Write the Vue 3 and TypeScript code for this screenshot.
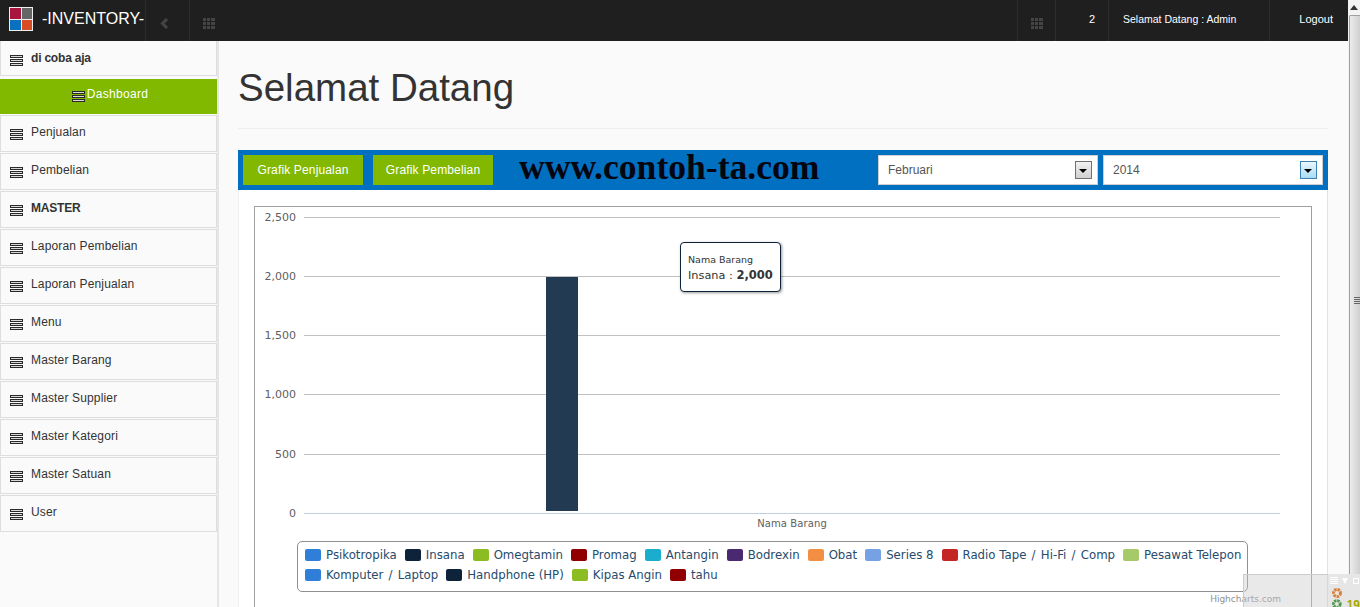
<script setup lang="ts">
interface LegendItem { parts: string[]; color: string }
const menu: { label: string; bold?: boolean; active?: boolean }[] = [
  { label: 'di coba aja', bold: true },
  { label: 'Dashboard', active: true },
  { label: 'Penjualan' },
  { label: 'Pembelian' },
  { label: 'MASTER', bold: true },
  { label: 'Laporan Pembelian' },
  { label: 'Laporan Penjualan' },
  { label: 'Menu' },
  { label: 'Master Barang' },
  { label: 'Master Supplier' },
  { label: 'Master Kategori' },
  { label: 'Master Satuan' },
  { label: 'User' },
]
const legend: LegendItem[] = [
  { parts: ['Psikotropika'], color: '#2f7ed8' },
  { parts: ['Insana'], color: '#0d233a' },
  { parts: ['Omegtamin'], color: '#8bbc21' },
  { parts: ['Promag'], color: '#910000' },
  { parts: ['Antangin'], color: '#1aadce' },
  { parts: ['Bodrexin'], color: '#492970' },
  { parts: ['Obat'], color: '#f28f43' },
  { parts: ['Series 8'], color: '#77a1e5' },
  { parts: ['Radio Tape', 'Hi-Fi', 'Comp'], color: '#c42525' },
  { parts: ['Pesawat Telepon'], color: '#a6c96a' },
  { parts: ['Komputer', 'Laptop'], color: '#2f7ed8' },
  { parts: ['Handphone (HP)'], color: '#0d233a' },
  { parts: ['Kipas Angin'], color: '#8bbc21' },
  { parts: ['tahu'], color: '#910000' },
]
const ticks = [
  { label: '2,500', y: 11 },
  { label: '2,000', y: 70 },
  { label: '1,500', y: 129 },
  { label: '1,000', y: 188 },
  { label: '500', y: 248 },
]
</script>

<template>
  <div class="page">
    <div class="shell">
      <header class="topbar">
        <div class="brand">
          <span class="logo"><i class="c1"></i><i class="c2"></i><i class="c3"></i><i class="c4"></i></span>
          <span class="brand-name">-INVENTORY-</span>
        </div>
        <div class="tool chev">
          <svg width="9" height="11" viewBox="0 0 9 11"><path d="M7 1 2.5 5.5 7 10" fill="none" stroke="#444" stroke-width="3"/></svg>
        </div>
        <div class="tool grid-tool">
          <svg width="12" height="11" viewBox="0 0 12 11" fill="#444"><path d="M0 0h3v3H0zM4 0h3v3H4zM8 0h4v3H8zM0 4h3v3H0zM4 4h3v3H4zM8 4h4v3H8zM0 8h3v3H0zM4 8h3v3H4zM8 8h4v3H8z"/></svg>
        </div>
        <div class="spacer"></div>
        <div class="tool grid-right">
          <svg width="12" height="11" viewBox="0 0 12 11" fill="#444"><path d="M0 0h3v3H0zM4 0h3v3H4zM8 0h4v3H8zM0 4h3v3H0zM4 4h3v3H4zM8 4h4v3H8zM0 8h3v3H0zM4 8h3v3H4zM8 8h4v3H8z"/></svg>
        </div>
        <div class="tbtxt count">2</div>
        <div class="tbtxt welcome">Selamat Datang : Admin</div>
        <div class="tbtxt logout">Logout</div>
      </header>
      <div class="body">
        <aside class="sidebar">
          <ul class="menu">
            <li v-for="m in menu" :key="m.label" :class="{ bold: m.bold, active: m.active }">
              <svg class="ham" width="13" height="11" viewBox="0 0 13 11"><path d="M0 0h13v3H0zM0 4h13v3H0zM0 8h13v3H0z" fill="#2a2a2a"/><path d="M1 1h11v1H1zM1 5h11v1H1zM1 9h11v1H1z" fill="#d8d8d8"/></svg>
              <span>{{ m.label }}</span>
            </li>
          </ul>
        </aside>
        <main class="main">
          <h1 class="title">Selamat Datang</h1>
          <div class="rule"></div>
          <div class="toolbar">
            <button class="btn">Grafik Penjualan</button>
            <button class="btn">Grafik Pembelian</button>
            <div class="site">www.contoh-ta.com</div>
            <div class="select s1"><span>Februari</span><b class="arrow"></b></div>
            <div class="select s2"><span>2014</span><b class="arrow focus"></b></div>
          </div>
          <div class="panel">
            <div class="chart">
              <svg class="plot" width="1055" height="320" viewBox="0 0 1055 320">
                <g v-for="t in ticks" :key="t.label">
                  <line x1="49" x2="1025" :y1="t.y - 0.5" :y2="t.y - 0.5" stroke="#c0c0c0"/>
                  <text x="41" :y="t.y + 3" text-anchor="end" class="axis">{{ t.label }}</text>
                </g>
                <line x1="49" x2="1025" y1="306.5" y2="306.5" stroke="#c0d0e0"/>
                <text x="41" y="310" text-anchor="end" class="axis">0</text>
                <rect x="291" y="70" width="32" height="234" fill="#233a53"/>
                <text x="537" y="320" text-anchor="middle" class="axis small">Nama Barang</text>
              </svg>
              <div class="tooltip">
                <div class="tt-head">Nama Barang</div>
                <div class="tt-body">Insana : <b>2,000</b></div>
              </div>
              <div class="legend">
                <div v-for="l in legend" :key="l.parts[0]" class="leg-item">
                  <i :style="{ background: l.color }"></i>
                  <span>
                    <template v-for="(p, n) in l.parts" :key="p"><span v-if="n > 0" class="sep"> / </span>{{ p }}</template>
                  </span>
                </div>
              </div>
              <div class="credit">Highcharts.com</div>
            </div>
          </div>
        </main>
      </div>
    </div>
    <div class="scrollbar">
      <div class="sb-up">
        <svg width="8" height="5" viewBox="0 0 8 5"><path d="M4 0 8 5H0z" fill="#333"/></svg>
      </div>
      <div class="sb-thumb">
        <span class="grip"></span>
      </div>
    </div>
    <div class="dock"></div>
    <div class="tray">
      <div class="tray-head"><span class="tray-menu"></span><span class="tray-down"></span><span class="tray-max"></span></div>
      <div class="tray-row">
        <svg width="10" height="10" viewBox="0 0 10 10"><circle cx="5" cy="5" r="3.5" fill="none" stroke="#d8813a" stroke-width="3" stroke-dasharray="2.5 0.8"/></svg>
      </div>
      <div class="tray-row">
        <svg width="10" height="10" viewBox="0 0 10 10"><circle cx="5" cy="5" r="3.5" fill="none" stroke="#4f9a4a" stroke-width="3" stroke-dasharray="2.5 0.8"/></svg>
        <em>19</em>
      </div>
    </div>
  </div>
</template>

<style>
html, body { margin: 0; height: 100%; overflow: hidden; background: #fafafa; }
</style>

<style scoped>
.page { position: relative; display: flex; width: 1360px; height: 607px; overflow: hidden; background: #fafafa; font-family: "Liberation Sans", Arial, sans-serif; }
.shell { width: 1348px; flex: none; display: flex; flex-direction: column; }
.topbar { height: 41px; flex: none; display: flex; background: #1f1f1f; color: #fff; position: relative; z-index: 2; }
.brand { width: 146px; flex: none; display: flex; align-items: center; border-right: 1px solid #2d2d2d; box-sizing: border-box; }
.logo { margin: 7px 0 0 9px; align-self: flex-start; width: 24px; height: 24px; box-sizing: border-box; background: #f0f0f0; padding: 1px; display: grid; grid-template-columns: 1fr 1fr; gap: 1px; }
.logo i { display: block; }
.c1 { background: #a8163f; } .c2 { background: #666; } .c3 { background: #0a70c0; } .c4 { background: #d94d26; }
.brand-name { margin-left: 9px; font-size: 16px; color: #fff; margin-top: -3px; }
.tool { flex: none; display: flex; align-items: center; justify-content: center; box-sizing: border-box; border-right: 1px solid #2d2d2d; padding-top: 6px; }
.chev { width: 44px; padding-right: 6px; }
.grid-tool { width: 39px; border-right: 0; border-left: 1px solid #2d2d2d; margin-left: -1px; }
.spacer { flex: 1; border-right: 1px solid #2d2d2d; }
.grid-right { width: 38px; }
.tbtxt { flex: none; display: flex; align-items: center; font-size: 11px; box-sizing: border-box; padding-bottom: 3px; }
.count { width: 53px; justify-content: flex-end; padding-right: 13px; border-right: 1px solid #2d2d2d; }
.welcome { width: 161px; padding-left: 14px; border-right: 1px solid #2d2d2d; font-size: 10.5px; }
.logout { width: 78px; justify-content: flex-end; padding-right: 15px; }
.body { flex: 1; display: flex; min-height: 0; }
.sidebar { width: 219px; flex: none; box-sizing: border-box; border-right: 2px solid #e6e6e6; background: #fafafa; }
.menu { list-style: none; margin: -2px 0 0; padding: 0; width: 217px; }
.menu li { height: 37px; box-sizing: border-box; margin-bottom: 1px; display: flex; align-items: flex-start; padding: 9px 0 0 9px; font-size: 12px; line-height: 14px; letter-spacing: .15px; color: #333; border: 1px solid #dedede; }
.menu li:first-child { padding-top: 11px; }
.menu li .ham { margin: 4px 8px 0 0; flex: none; }
.menu li.bold { font-weight: bold; letter-spacing: -.2px; }
.menu li.active { background: #80b900; color: #fff; justify-content: center; border: 0; border-top: 2px solid #fafafa; padding: 8px 0 0 3px; letter-spacing: .3px; }
.menu li.active .ham { margin-right: 2px; }
.main { flex: 1; min-width: 0; padding: 0 20px 0 19px; }
.title { margin: 0; padding-top: 24px; font-size: 38.5px; line-height: 46px; font-weight: normal; color: #333; }
.rule { margin-top: 17px; height: 1px; background: #eee; }
.toolbar { margin-top: 21px; height: 40px; box-sizing: border-box; background: #0170c1; display: flex; align-items: flex-start; padding: 5px 5px 0; }
.btn { flex: none; height: 30px; width: 120px; padding: 0; border: 0; background: #82b900; color: #fff; font: 12px "Liberation Sans", Arial, sans-serif; letter-spacing: .15px; margin-right: 10px; }
.site { flex: 1; min-width: 0; padding-left: 16px; font: bold 35.6px/24px "Liberation Serif", "Times New Roman", serif; color: #050510; white-space: nowrap; }
.select { flex: none; width: 220px; height: 30px; box-sizing: border-box; background: #fff; border: 1px solid #cfcfcf; display: flex; align-items: center; justify-content: space-between; padding: 0 5px 0 9px; font-size: 12px; color: #555; }
.s1 { margin-right: 5px; }
.arrow { width: 17px; height: 18px; box-sizing: border-box; border: 1px solid #707070; background: linear-gradient(#f2f2f2, #d0d0d0); position: relative; }
.arrow::after { content: ""; position: absolute; left: 3px; top: 7px; border: 4px solid transparent; border-top: 4px solid #000; border-bottom: 0; }
.arrow.focus { border-color: #3c7fb1; background: linear-gradient(#eaf6fd, #a9dbf6); }
.panel { background: #fff; height: 417px; border-right: 1px solid #e3e3e3; border-left: 1px solid #f0f0f0; box-sizing: border-box; padding: 16px 15px 0 15px; }
.chart { position: relative; height: 420px; box-sizing: border-box; border: 1px solid #a0a0a0; border-bottom: 0; background: #fff; }
.plot { display: block; overflow: visible; }
.axis { font: 11px "DejaVu Sans", Verdana, sans-serif; fill: #606060; }
.small { font-size: 10px; letter-spacing: .1px; }
.tooltip { position: absolute; left: 425px; top: 35px; width: 101px; height: 50px; box-sizing: border-box; padding: 11px 0 0 7px; background: #fff; border: 1px solid #0d233a; border-radius: 4px; box-shadow: 1px 1px 3px rgba(0,0,0,.4); font-family: "DejaVu Sans", Verdana, sans-serif; color: #333; }
.tt-head { font-size: 9.5px; line-height: 12px; }
.tt-body { font-size: 11.3px; line-height: 18px; white-space: nowrap; }
.tt-body b { font-size: 11.5px; }
.legend { position: absolute; left: 42px; top: 334px; width: 951px; height: 51px; box-sizing: border-box; border: 1px solid #909090; border-radius: 5px; padding: 3px 0 0 7px; display: flex; flex-wrap: wrap; align-content: flex-start; column-gap: 8px; background: #fff; }
.leg-item { display: flex; align-items: center; height: 20px; font: 11.75px "DejaVu Sans", Verdana, sans-serif; color: #274b6d; white-space: pre; }
.leg-item i { width: 16px; height: 12px; border-radius: 2px; margin-right: 5px; display: block; flex: none; }
.sep { margin: 0 1.5px; }
.credit { position: absolute; right: 30px; top: 387px; font: 9px "DejaVu Sans", Verdana, sans-serif; color: #909090; }
.scrollbar { width: 12px; flex: none; background: #f3f3f3; box-sizing: border-box; display: flex; flex-direction: column; }
.sb-up { height: 15px; display: flex; justify-content: center; align-items: center; }
.sb-thumb { flex: 1; position: relative; margin-left: 1px; border: 1px solid #a0a0a0; border-width: 1px 0 0 1px; border-top-left-radius: 2px; background: linear-gradient(90deg, #ececec, #cfcfcf); }
.grip { position: absolute; left: 4px; top: 281px; width: 7px; height: 8px; background: repeating-linear-gradient(#666 0 1px, transparent 1px 2px); }
.dock { position: absolute; left: 1243px; top: 574px; width: 85px; height: 33px; background: rgba(200,200,200,.4); border: 1px solid #ccc; border-width: 1px 0 0 1px; box-sizing: border-box; }
.tray { position: absolute; left: 1328px; top: 574px; width: 32px; height: 33px; background: #e6e6e6; }
.tray-head { height: 13px; display: flex; align-items: center; gap: 4px; padding-left: 2px; }
.tray-menu { width: 8px; height: 7px; background: repeating-linear-gradient(#fff 0 1px, transparent 1px 2px); }
.tray-down { border: 3.5px solid transparent; border-top: 6px solid #fff; border-bottom: 0; }
.tray-max { width: 6px; height: 6px; border: 1px solid #fff; box-sizing: border-box; margin-left: 1px; }
.tray-row { display: flex; align-items: center; height: 11px; padding-left: 4px; gap: 5px; }
.tray-row em { font: bold 12px "Liberation Sans", sans-serif; font-style: normal; color: #a8a800; margin-top: 2px; }
</style>
